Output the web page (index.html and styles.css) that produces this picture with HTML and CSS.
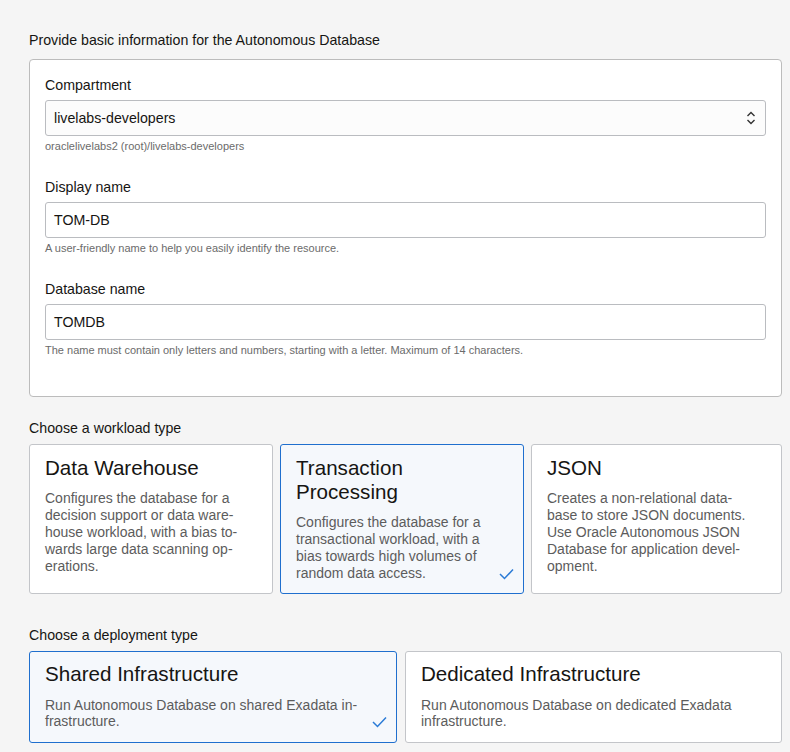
FILE: index.html
```html
<!DOCTYPE html>
<html lang="en">
<head>
<meta charset="utf-8">
<link rel="stylesheet" href="styles.css">
</head>
<body>
<div class="page">
  <h2 class="section-title first">Provide basic information for the Autonomous Database</h2>
  <div class="panel">
    <div class="field">
      <label class="label">Compartment</label>
      <div class="select">
        <span>livelabs-developers</span>
        <svg class="chev" width="10" height="14" viewBox="0 0 10 14"><path d="M1.5 5 L5 1.5 L8.5 5" fill="none" stroke="#333" stroke-width="1.4"/><path d="M1.5 9 L5 12.5 L8.5 9" fill="none" stroke="#333" stroke-width="1.4"/></svg>
      </div>
      <div class="help">oraclelivelabs2 (root)/livelabs-developers</div>
    </div>
    <div class="field">
      <label class="label">Display name</label>
      <div class="input">TOM-DB</div>
      <div class="help">A user-friendly name to help you easily identify the resource.</div>
    </div>
    <div class="field">
      <label class="label">Database name</label>
      <div class="input">TOMDB</div>
      <div class="help">The name must contain only letters and numbers, starting with a letter. Maximum of 14 characters.</div>
    </div>
  </div>

  <h2 class="section-title">Choose a workload type</h2>
  <div class="cards three">
    <div class="card">
      <div class="card-title">Data Warehouse</div>
      <div class="card-desc">Configures the database for a decision support or data ware&shy;house workload, with a bias to&shy;wards large data scanning op&shy;erations.</div>
    </div>
    <div class="card selected">
      <div class="card-title">Transaction Processing</div>
      <div class="card-desc">Configures the database for a transactional workload, with a bias towards high volumes of random data access.</div>
      <svg class="check" width="15" height="12" viewBox="0 0 15 12"><path d="M1 6 L5.5 10.5 L14 1.5" fill="none" stroke="#2b7bd6" stroke-width="1.5"/></svg>
    </div>
    <div class="card">
      <div class="card-title">JSON</div>
      <div class="card-desc">Creates a non-relational data&shy;base to store JSON documents. Use Oracle Autonomous JSON Database for application devel&shy;opment.</div>
    </div>
  </div>

  <h2 class="section-title deploy">Choose a deployment type</h2>
  <div class="cards two">
    <div class="card short selected">
      <div class="card-title">Shared Infrastructure</div>
      <div class="card-desc">Run Autonomous Database on shared Exadata in&shy;frastructure.</div>
      <svg class="check" width="15" height="12" viewBox="0 0 15 12"><path d="M1 6 L5.5 10.5 L14 1.5" fill="none" stroke="#2b7bd6" stroke-width="1.5"/></svg>
    </div>
    <div class="card short">
      <div class="card-title">Dedicated Infrastructure</div>
      <div class="card-desc">Run Autonomous Database on dedicated Exadata infrastructure.</div>
    </div>
  </div>
</div>
</body>
</html>
```
FILE: styles.css
```css
html, body {
  margin: 0;
  padding: 0;
  background: #f5f5f5;
}
body {
  font-family: "Liberation Sans", Arial, sans-serif;
  color: #161513;
}
.page {
  padding: 32px 8px 0 29px;
}
.section-title {
  font-size: 14.2px;
  font-weight: normal;
  line-height: 17px;
  margin: 23px 0 7px;
}
.section-title.first {
  margin: 0 0 10px;
}
.section-title.deploy {
  margin-top: 33px;
}
.panel {
  background: #fff;
  border: 1px solid #bcbcbc;
  border-radius: 4px;
  padding: 17px 15px 40px;
}
.field + .field {
  margin-top: 27px;
}
.label {
  display: block;
  font-size: 14.2px;
  line-height: 17px;
  margin-bottom: 6px;
}
.select, .input {
  box-sizing: border-box;
  height: 36px;
  border: 1px solid #babcc0;
  border-radius: 3px;
  background: #fcfcfc;
  font-size: 14.2px;
  padding: 0 8px;
  display: flex;
  align-items: center;
  justify-content: space-between;
}
.input {
  background: #fff;
}
.chev {
  margin-right: 1px;
}
.help {
  font-size: 11px;
  line-height: 12px;
  color: #6b6b6b;
  margin-top: 4px;
}
.cards {
  display: grid;
  gap: 7px;
}
.cards.three {
  grid-template-columns: 244px 244px 1fr;
}
.cards.two {
  grid-template-columns: 368px 1fr;
  gap: 8px;
}
.card {
  position: relative;
  background: #fff;
  border: 1px solid #c3c5c9;
  border-radius: 3px;
  padding: 11px 15px 11px;
  min-height: 126px;
}
.card.short {
  min-height: 0;
  padding: 10px 15px 13px;
}
.card.selected {
  border-color: #1f6fce;
  background: #f5f8fc;
}
.card-title {
  font-size: 20.6px;
  line-height: 24px;
}
.card-desc {
  font-size: 14px;
  line-height: 17px;
  color: #5c5c5c;
  margin-top: 10px;
}
.cards.three .card-desc {
  max-width: 200px;
}
.card.short .card-desc {
  line-height: 16px;
  margin-top: 11px;
}
.check {
  position: absolute;
  right: 9px;
  bottom: 13px;
}
.card.short .check {
  bottom: 14px;
}
```
